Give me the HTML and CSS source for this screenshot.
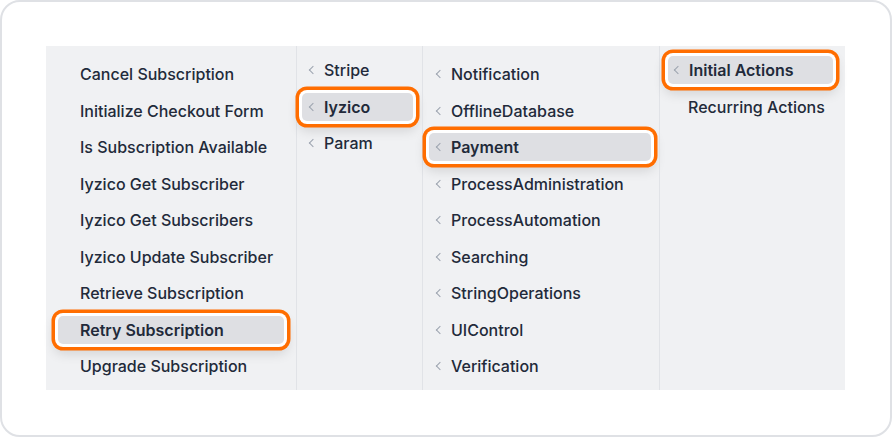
FILE: index.html
```html
<!DOCTYPE html>
<html>
<head>
<meta charset="utf-8">
<link rel="stylesheet" href="styles.css">
</head>
<body>
<div class="card">
  <div class="panel">
    <div class="col col-1">
      <div class="item">Cancel Subscription</div>
      <div class="item">Initialize Checkout Form</div>
      <div class="item">Is Subscription Available</div>
      <div class="item">Iyzico Get Subscriber</div>
      <div class="item">Iyzico Get Subscribers</div>
      <div class="item">Iyzico Update Subscriber</div>
      <div class="item">Retrieve Subscription</div>
      <div class="item selected">Retry Subscription</div>
      <div class="item">Upgrade Subscription</div>
    </div>
    <div class="col col-2">
      <div class="item"><span class="chev"></span>Stripe</div>
      <div class="item selected"><span class="chev"></span>Iyzico</div>
      <div class="item"><span class="chev"></span>Param</div>
    </div>
    <div class="col col-3">
      <div class="item"><span class="chev"></span>Notification</div>
      <div class="item"><span class="chev"></span>OfflineDatabase</div>
      <div class="item selected"><span class="chev"></span>Payment</div>
      <div class="item"><span class="chev"></span>ProcessAdministration</div>
      <div class="item"><span class="chev"></span>ProcessAutomation</div>
      <div class="item"><span class="chev"></span>Searching</div>
      <div class="item"><span class="chev"></span>StringOperations</div>
      <div class="item"><span class="chev"></span>UIControl</div>
      <div class="item"><span class="chev"></span>Verification</div>
    </div>
    <div class="col col-4">
      <div class="item selected"><span class="chev"></span>Initial Actions</div>
      <div class="item">Recurring Actions</div>
    </div>
  </div>
</div>
</body>
</html>
```

FILE: styles.css
```css
* { box-sizing: border-box; }
html, body { margin: 0; padding: 0; background: #ffffff; }
body {
  width: 892px;
  height: 437px;
  font-family: Inter, "Noto Sans", sans-serif;
}
.card {
  width: 892px;
  height: 437px;
  border: 2px solid #dfe1e5;
  border-radius: 20px;
  background: #ffffff;
  padding: 44px 0 0 44px;
}
.panel {
  display: flex;
  width: 799px;
  height: 344px;
  background: #f0f1f3;
}
.col {
  display: flex;
  flex-direction: column;
  gap: 8.5px;
  border-left: 1px solid #e1e3e7;
}
.col-1 { width: 250px; padding: 14px 12px 0 12px; border-left: none; }
.col-2 { width: 126px; padding: 10px 9px 0 5px; }
.col-3 { width: 237px; padding: 14px 8px 0 6px; }
.col-4 { width: 186px; padding: 10px 12px 0 8px; }
.item {
  height: 28px;
  display: flex;
  align-items: center;
  font-size: 16px;
  font-weight: 500;
  color: #222a3a;
  white-space: nowrap;
  border-radius: 4px;
}
.col-1 .item { padding-left: 22px; }
.col-2 .item { padding-left: 6px; }
.col-3 .item { padding-left: 6px; }
.col-4 .item { padding-left: 5px; }
.col-4 .item:not(.selected) { padding-left: 20px; }
.chev {
  display: inline-block;
  width: 6px;
  height: 6px;
  border-left: 1.6px solid #9ca3af;
  border-bottom: 1.6px solid #9ca3af;
  transform: rotate(45deg);
  margin-right: 8px;
  margin-left: 2px;
}
.item.selected {
  background: #dedfe3;
  font-weight: 600;
  box-shadow: 0 0 0 3px #ffffff, 0 0 0 6.5px #ff6d00, 0 6px 12px 4px rgba(0, 0, 0, 0.12);
  border-radius: 5px;
}
```
